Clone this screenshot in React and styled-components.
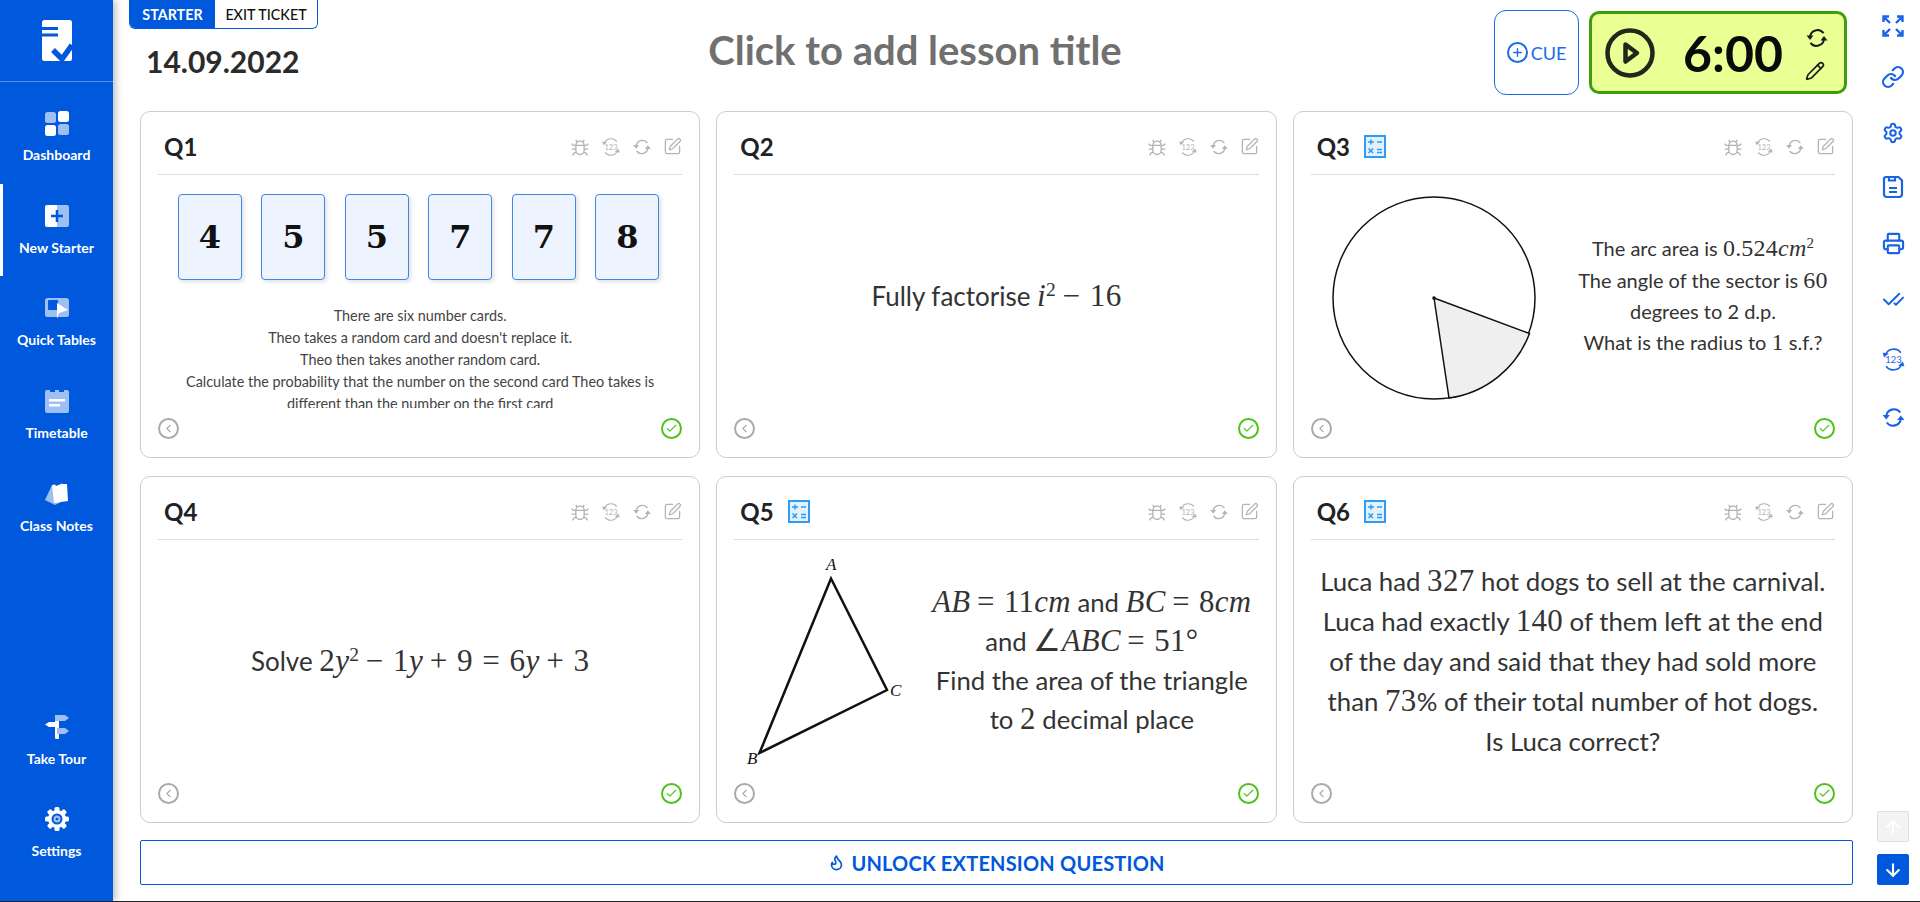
import React from "react";
import styled, { createGlobalStyle } from "styled-components";
import { Link, Settings, Printer, CheckCheck, Flame, ArrowUp, ArrowDown, SquarePen, Pencil, ChevronLeft, Check, Plus } from "lucide-react";

const BLUE = "#0058dc";
const LIGHT = "#9dbff2";

const GlobalStyle = createGlobalStyle`
    html, body { margin: 0; padding: 0; background: #fff; }
    body { font-family: Lato, "Noto Sans", sans-serif; color: #333; }
    * { box-sizing: border-box; }
`;

const Page = styled.div`
    display: flex;
    height: 902px;
    overflow: hidden;
    border-bottom: 1px solid #222;
`;

const Sidebar = styled.aside`
    width: 113px;
    flex: none;
    background: ${BLUE};
    display: flex;
    flex-direction: column;
    box-shadow: 3px 0 7px rgba(0, 0, 0, .25);
    position: relative;
    z-index: 2;
`;

const LogoBox = styled.div`
    height: 82px;
    margin-bottom: 9px;
    border-bottom: 1px solid rgba(255, 255, 255, .35);
    display: flex;
    align-items: flex-start;
    justify-content: center;
    padding-top: 20px;
`;

const NavList = styled.nav`
    display: flex;
    flex-direction: column;
    &:last-child {
        margin-top: auto;
        padding-bottom: 21px;
    }
`;

const NavItem = styled.a`
    height: 92.7px;
    padding-top: 18px;
    display: flex;
    flex-direction: column;
    align-items: center;
    gap: 9px;
    color: #fff;
    font-size: 14px;
    font-weight: 700;
    line-height: 18px;
    border-left: 3px solid ${(p) => (p.$active ? "#fff" : "transparent")};
    padding-right: 3px;
    svg { height: 28px; width: 26px; display: block; }
`;

const Main = styled.main`
    flex: 1;
    min-width: 0;
    padding: 0 13px 0 16px;
    display: flex;
    flex-direction: column;
`;

const Header = styled.header`
    height: 111px;
    display: flex;
    padding-right: 6px;
`;

const HeaderLeft = styled.div`
    width: 207px;
    flex: none;
`;

const Tabs = styled.div`
    display: inline-flex;
    height: 29px;
    border: 1px solid ${BLUE};
    border-top: none;
    border-radius: 0 0 6px 6px;
    overflow: hidden;
`;

const Tab = styled.div`
    display: flex;
    align-items: center;
    justify-content: center;
    font-size: 14.3px;
    font-weight: ${(p) => (p.$active ? 700 : 500)};
    width: ${(p) => p.$w}px;
    color: ${(p) => (p.$active ? "#fff" : "#111")};
    background: ${(p) => (p.$active ? BLUE : "#fff")};
`;

const DateText = styled.div`
    margin: 14px 0 0 17px;
    font-size: 30px;
    line-height: 36px;
    font-weight: 700;
    color: #2b2b2b;
`;

const LessonTitle = styled.h1`
    flex: 1;
    margin: 8px 0 0;
    height: 84px;
    display: flex;
    align-items: center;
    justify-content: center;
    font-size: 40px;
    font-weight: 700;
    color: #707070;
`;

const CueButton = styled.button`
    width: 85px;
    height: 85px;
    margin-top: 10px;
    background: #fff;
    border: 1px solid #1a6be8;
    border-radius: 12px;
    display: flex;
    align-items: center;
    justify-content: center;
    gap: 3px;
    padding: 0;
    color: #1a6be8;
    font-family: inherit;
    font-size: 18px;
`;

const Timer = styled.div`
    width: 258px;
    height: 83px;
    margin: 11px 0 0 10px;
    background: #eaff94;
    border: 3px solid #3f9c0a;
    border-radius: 10px;
    display: flex;
    align-items: center;
    padding: 0 15px 0 13px;
`;

const TimeText = styled.div`
    margin-left: 28px;
    font-size: 50px;
    font-weight: 700;
    color: #0a0a0a;
    line-height: 1;
`;

const TimerActions = styled.div`
    margin-left: auto;
    display: flex;
    flex-direction: column;
    gap: 11px;
    color: #1a1a1a;
    margin-top: 2px;
`;

const Grid = styled.section`
    margin-left: 11px;
    display: grid;
    grid-template-columns: repeat(3, 1fr);
    grid-auto-rows: 347px;
    gap: 18px 16px;
`;

const Card = styled.article`
    border: 1px solid #ccc;
    border-radius: 10px;
    padding: 0 17px;
    display: flex;
    flex-direction: column;
    background: #fff;
    min-width: 0;
`;

const CardHead = styled.div`
    height: 63px;
    flex: none;
    border-bottom: 1px solid #d6dfe8;
    display: flex;
    align-items: center;
    padding: 8px 0 1px 6px;
`;

const QTitle = styled.h2`
    margin: 0;
    font-size: 24px;
    font-weight: 700;
    color: #222;
`;

const CalcBadge = styled.svg`
    width: 22px;
    height: 23px;
    margin-left: 14px;
`;

const HeadTools = styled.div`
    margin-left: auto;
    display: flex;
    align-items: center;
    gap: 11px;
    color: #b3b3b3;
`;

const Body = styled.div`
    flex: 1;
    min-height: 0;
    overflow: hidden;
    padding-top: 12px;
    display: flex;
    align-items: center;
    justify-content: ${(p) => p.$justify || "center"};
    flex-direction: ${(p) => p.$dir || "row"};
`;

const CardFoot = styled.div`
    height: 49px;
    flex: none;
    padding-top: 10px;
    display: flex;
    justify-content: space-between;
    align-items: flex-start;
`;

const RoundIcon = styled.span`
    width: 21px;
    height: 21px;
    border-radius: 50%;
    border: 2px solid ${(p) => p.$color};
    color: ${(p) => p.$color};
    display: flex;
    align-items: center;
    justify-content: center;
`;

const NumberRow = styled.div`
    display: flex;
    gap: 19.5px;
    margin: 7px 3px 0 0;
    flex: none;
`;

const NumberCard = styled.div`
    width: 64px;
    height: 86px;
    background: #eef4ff;
    border: 1px solid #3f86e6;
    border-radius: 4px;
    box-shadow: 2px 2px 4px rgba(0, 0, 0, .12);
    display: flex;
    align-items: center;
    justify-content: center;
    font-family: "DejaVu Serif", serif;
    font-weight: 700;
    font-size: 32px;
    color: #111;
`;

const SmallText = styled.div`
    margin-top: 25px;
    padding: 0 24px;
    font-size: 14.4px;
    line-height: 22px;
    text-align: center;
    color: #444;
    flex: none;
    width: 100%;
`;

const QuestionText = styled.div`
    font-size: ${(p) => p.$size}px;
    line-height: ${(p) => p.$line}px;
    text-align: center;
    color: #333;
    white-space: nowrap;
    flex: none;
    margin-bottom: 3px;
    width: ${(p) => (p.$w ? `${p.$w}px` : "auto")};
    margin-left: ${(p) => (p.$w ? "auto" : 0)};
`;

const Diagram = styled.svg`
    flex: none;
    margin-left: ${(p) => p.$left || 0}px;
    display: block;
`;

const M = styled.span`
    font-family: "Liberation Serif", serif;
    font-size: 1.2em;
    word-spacing: .04em;
    letter-spacing: .01em;
`;

const V = styled(M)`
    font-style: italic;
`;

const Sup = styled.sup`
    font-family: "Liberation Serif", serif;
    font-size: .75em;
    line-height: 0;
`;

const UnlockBar = styled.button`
    margin: 17px 0 0 11px;
    height: 45px;
    background: #fff;
    border: 1px solid ${BLUE};
    border-radius: 2px;
    color: ${BLUE};
    font-family: inherit;
    font-size: 20px;
    letter-spacing: .2px;
    font-weight: 700;
    display: flex;
    align-items: center;
    justify-content: center;
    gap: 6px;
`;

const Rail = styled.aside`
    width: 54px;
    flex: none;
    display: flex;
    flex-direction: column;
    align-items: center;
    padding-top: 14px;
    color: #1a63e6;
`;

const RailIcon = styled.div`
    height: 24px;
    margin-top: ${(p) => p.$gap}px;
    display: flex;
    align-items: center;
    justify-content: center;
`;

const ScrollBtn = styled.button`
    width: 32px;
    height: 31px;
    padding: 0;
    border-radius: 2px;
    display: flex;
    align-items: center;
    justify-content: center;
    color: #fff;
    background: ${(p) => (p.$on ? BLUE : "#f3f3f3")};
    border: 1px solid ${(p) => (p.$on ? BLUE : "#dedede")};
    margin-top: ${(p) => p.$top};
    margin-bottom: ${(p) => p.$bottom || "0"};
`;

/* sidebar drawings */
const LogoIcon = () => (
    <svg width="30" height="41" viewBox="0 0 30 41">
        <rect width="30" height="41" rx="2.5" fill="#fff" />
        <path d="M0 7h16v3H0zM0 13.500h16v3H0z" fill={BLUE} />
        <path d="M11 30l9 9 10-14" fill="none" stroke={BLUE} strokeWidth="5.500" />
    </svg>
);

const DashIcon = () => (
    <svg viewBox="0 0 26 28">
        <rect x="1" y="3" width="11" height="11" rx="2.5" fill={LIGHT} />
        <rect x="14" y="2" width="11" height="11" rx="2.5" fill="#fff" />
        <rect x="1" y="16" width="11" height="11" rx="2.5" fill="#fff" />
        <rect x="14" y="15" width="11" height="11" rx="2.5" fill={LIGHT} />
    </svg>
);

const StarterIcon = () => (
    <svg viewBox="0 0 26 28">
        <path d="M3 3h10v22H3a2 2 0 0 1-2-2V5a2 2 0 0 1 2-2z" fill="#fff" />
        <path d="M13 3h10a2 2 0 0 1 2 2v18a2 2 0 0 1-2 2H13z" fill={LIGHT} />
        <path d="M13 8v12M7 14h12" stroke={BLUE} strokeWidth="2.500" />
    </svg>
);

const TablesIcon = () => (
    <svg viewBox="0 0 26 28">
        <rect x="1" y="4" width="24" height="19" rx="2.500" fill={LIGHT} />
        <rect x="4" y="6" width="10" height="10" rx="1" fill={BLUE} />
        <path d="M13 9l11 7-9 3-2 6z" fill="#fff" />
    </svg>
);

const TimetableIcon = () => (
    <svg viewBox="0 0 26 28">
        <path d="M1 5a2 2 0 0 1 2-2h3v2h5V3h4v2h5V3h3a2 2 0 0 1 2 2v19a2 2 0 0 1-2 2H3a2 2 0 0 1-2-2z" fill={LIGHT} />
        <path d="M5 12h16v2.500H5zM5 17h11v2.500H5z" fill="#fff" />
    </svg>
);

const NotesIcon = () => (
    <svg viewBox="0 0 26 28">
        <path d="M8 5l-7 15 10 5 6-3z" fill={LIGHT} />
        <path d="M8 5l3-.5 1 1.500 5-2 1-.5 1 .5 4 0 1 17-14 2z" fill="#fff" />
    </svg>
);

const TourIcon = () => (
    <svg viewBox="0 0 26 28">
        <rect x="11" y="2" width="4" height="24" rx="1.500" fill="#fff" />
        <path d="M11 2h10l4 3-4 3H11z" fill={LIGHT} />
        <path d="M13 16h8l4-3-4-3h-8z" fill={LIGHT} transform="translate(0 5)" />
        <path d="M15 9H5l-4 2.500L5 14h10z" fill="#fff" />
    </svg>
);

const GearIcon = () => (
    <svg viewBox="0 0 26 28">
        {[0, 45, 90, 135].map((a) => (
            <rect key={a} x="10.500" y="2" width="5" height="24" rx="1.500" fill="#fff" transform={`rotate(${a} 13 14)`} />
        ))}
        <circle cx="13" cy="14" r="9" fill="#fff" />
        <circle cx="13" cy="14" r="5.500" fill={BLUE} />
        <circle cx="13" cy="14" r="3.500" fill={LIGHT} />
        <circle cx="13" cy="14" r="1.300" fill={BLUE} />
    </svg>
);

/* tool icons */
const SyncIcon = ({ size = 24, width = 2 }) => (
    <svg width={size} height={size} viewBox="0 0 24 24" fill="none" stroke="currentColor" strokeWidth={width}>
        <path d="M5 11a7.500 7.500 0 0 1 13.500-3.800" />
        <path d="M19 13a7.500 7.500 0 0 1-13.500 3.800" />
        <path d="M1.500 9.500h7L5 14z" fill="currentColor" stroke="none" />
        <path d="M15.500 14.500h7L19 10z" fill="currentColor" stroke="none" />
    </svg>
);

const Sync123Icon = ({ size = 24, width = 1.6 }) => (
    <svg width={size} height={size} viewBox="0 0 24 24" fill="none" stroke="currentColor" strokeWidth={width}>
        <path d="M4.500 7A8 7 0 0 1 19 5.500" />
        <path d="M19.500 17A8 7 0 0 1 5 18.500" />
        <path d="M1.500 5.500l6 .5L3 10z" fill="currentColor" stroke="none" />
        <path d="M22.500 18.500l-6-.5 4.500-4z" fill="currentColor" stroke="none" />
        <text x="12" y="15.500" textAnchor="middle" fontSize="9" fontFamily="Lato, sans-serif" fill="currentColor" stroke="none">123</text>
    </svg>
);

const BugIcon = () => (
    <svg width="20" height="20" viewBox="0 0 24 24" fill="none" stroke="currentColor" strokeWidth="1.600">
        <path d="M7 10a5 5 0 0 1 10 0v6a5 5 0 0 1-10 0z" />
        <path d="M8.500 6.500L7 3.500M15.500 6.500L17 3.500M7 10H4L2 8M17 10h3l2-2M7 14.500H2M17 14.500h5M7.500 18.500L5 19l-2 3M16.500 18.500L19 19l2 3M7 10h10" />
    </svg>
);

const ExpandIcon = () => (
    <svg width="22" height="22" viewBox="0 0 22 22" fill="none" stroke="currentColor" strokeWidth="2.400">
        <path d="M1.500 7V1.500H7M1.500 1.500L8 8M20.500 7V1.500H15M20.500 1.500L14 8M1.500 15v5.500H7M1.500 20.500L8 14M20.500 15v5.500H15M20.500 20.500L14 14" />
    </svg>
);

const SaveIcon = () => (
    <svg width="22" height="24" viewBox="0 0 22 24" fill="none" stroke="currentColor" strokeWidth="2.200">
        <path d="M4 2h12.500L20 5.500V19a3 3 0 0 1-3 3H5a3 3 0 0 1-3-3V4a2 2 0 0 1 2-2z" />
        <path d="M7 2v3.500h6V2M7 13h8M7 17h8" />
    </svg>
);

const PlayIcon = () => (
    <svg width="50" height="50" viewBox="0 0 50 50" fill="none" stroke="#24261a" strokeWidth="4.500">
        <circle cx="25" cy="25" r="22.500" />
        <path d="M20.500 16.500L32 25l-11.500 8.500z" strokeLinejoin="round" />
    </svg>
);

const CalcIcon = () => (
    <CalcBadge viewBox="0 0 22 23">
        <rect x="1" y="1" width="20" height="21" fill="#e2f1ff" stroke="#2e9bf5" strokeWidth="2" />
        <path d="M4 7h6M7 4.500v5M13 7h5M4.500 13.500l4.500 4.500M9 13.500l-4.500 4.500M13 14.500h5M13 17.500h5" stroke="#2e9bf5" strokeWidth="1.500" fill="none" />
    </CalcBadge>
);

const questions = [
    {
        id: "Q1",
        body: (
            <Body $dir="column" $justify="flex-start">
                <NumberRow>
                    {[4, 5, 5, 7, 7, 8].map((n, i) => <NumberCard key={i}>{n}</NumberCard>)}
                </NumberRow>
                <SmallText>
                    There are six number cards.<br />
                    Theo takes a random card and doesn't replace it.<br />
                    Theo then takes another random card.<br />
                    Calculate the probability that the number on the second card Theo takes is different than the number on the first card
                </SmallText>
            </Body>
        ),
    },
    {
        id: "Q2",
        body: (
            <Body>
                <QuestionText $size={26} $line={32}>Fully factorise <V>i</V><Sup>2</Sup> <M>− 16</M></QuestionText>
            </Body>
        ),
    },
    {
        id: "Q3",
        calc: true,
        body: (
            <Body $justify="flex-start">
                <Diagram $left={21} width="204" height="204" viewBox="0 0 204 204">
                    <circle cx="102" cy="102" r="101" fill="#fff" stroke="#111" strokeWidth="1.500" />
                    <path d="M102 102L197.500 137.500A101 101 0 0 1 117 202z" fill="#efefef" stroke="#111" strokeWidth="1.500" />
                    <circle cx="102" cy="102" r="1.800" fill="#111" />
                </Diagram>
                <QuestionText $size={20} $line={31.400} $w={264}>
                    The arc area is <M>0.524</M><V>cm</V><Sup>2</Sup><br />
                    The angle of the sector is <M>60</M><br />
                    degrees to 2 d.p.<br />
                    What is the radius to <M>1</M> s.f.?
                </QuestionText>
            </Body>
        ),
    },
    {
        id: "Q4",
        body: (
            <Body>
                <QuestionText $size={26} $line={32}>
                    Solve <M>2</M><V>y</V><Sup>2</Sup> <M>− 1</M><V>y</V> <M>+ 9 = 6</M><V>y</V> <M>+ 3</M>
                </QuestionText>
            </Body>
        ),
    },
    {
        id: "Q5",
        calc: true,
        body: (
            <Body $justify="flex-start">
                <Diagram width="190" height="221" viewBox="0 0 190 221">
                    <path d="M97 26.500L153 138 25.500 201z" fill="none" stroke="#111" strokeWidth="2.500" strokeLinejoin="miter" />
                    <text x="92" y="18" fontFamily="Liberation Serif" fontStyle="italic" fontSize="17" fill="#111">A</text>
                    <text x="156" y="144" fontFamily="Liberation Serif" fontStyle="italic" fontSize="17" fill="#111">C</text>
                    <text x="13" y="212" fontFamily="Liberation Serif" fontStyle="italic" fontSize="17" fill="#111">B</text>
                </Diagram>
                <QuestionText $size={25.700} $line={39} $w={335}>
                    <V>AB</V> <M>= 11</M><V>cm</V> and <V>BC</V> <M>= 8</M><V>cm</V><br />
                    and <M>∠</M><V>ABC</V> <M>= 51°</M><br />
                    Find the area of the triangle<br />
                    to <M>2</M> decimal place
                </QuestionText>
            </Body>
        ),
    },
    {
        id: "Q6",
        calc: true,
        body: (
            <Body>
                <QuestionText $size={25.800} $line={39.500}>
                    Luca had <M>327</M> hot dogs to sell at the carnival.<br />
                    Luca had exactly <M>140</M> of them left at the end<br />
                    of the day and said that they had sold more<br />
                    than <M>73</M>% of their total number of hot dogs.<br />
                    Is Luca correct?
                </QuestionText>
            </Body>
        ),
    },
];

const railIcons = [
    { gap: 0, icon: <ExpandIcon /> },
    { gap: 27, icon: <Link size={24} strokeWidth={2.2} /> },
    { gap: 32, icon: <Settings size={22} strokeWidth={2.2} /> },
    { gap: 30, icon: <SaveIcon /> },
    { gap: 32, icon: <Printer size={23} strokeWidth={2.2} /> },
    { gap: 32, icon: <CheckCheck size={23} strokeWidth={2} /> },
    { gap: 36, icon: <Sync123Icon size={25} /> },
    { gap: 34, icon: <SyncIcon size={25} /> },
];

function App() {
    return (
        <>
            <GlobalStyle />
            <Page>
                <Sidebar>
                    <LogoBox><LogoIcon /></LogoBox>
                    <NavList>
                        <NavItem><DashIcon />Dashboard</NavItem>
                        <NavItem $active><StarterIcon />New Starter</NavItem>
                        <NavItem><TablesIcon />Quick Tables</NavItem>
                        <NavItem><TimetableIcon />Timetable</NavItem>
                        <NavItem><NotesIcon />Class Notes</NavItem>
                    </NavList>
                    <NavList>
                        <NavItem><TourIcon />Take Tour</NavItem>
                        <NavItem><GearIcon />Settings</NavItem>
                    </NavList>
                </Sidebar>

                <Main>
                    <Header>
                        <HeaderLeft>
                            <Tabs>
                                <Tab $active $w={85}>STARTER</Tab>
                                <Tab $w={102}>EXIT TICKET</Tab>
                            </Tabs>
                            <DateText>14.09.2022</DateText>
                        </HeaderLeft>
                        <LessonTitle>Click to add lesson title</LessonTitle>
                        <CueButton>
                            <RoundIcon $color="#1a6be8"><Plus size={13} strokeWidth={2.5} /></RoundIcon>
                            CUE
                        </CueButton>
                        <Timer>
                            <PlayIcon />
                            <TimeText>6:00</TimeText>
                            <TimerActions>
                                <SyncIcon size={24} />
                                <Pencil size={20} strokeWidth={2} />
                            </TimerActions>
                        </Timer>
                    </Header>

                    <Grid>
                        {questions.map((q) => (
                            <Card key={q.id}>
                                <CardHead>
                                    <QTitle>{q.id}</QTitle>
                                    {q.calc && <CalcIcon />}
                                    <HeadTools>
                                        <BugIcon />
                                        <Sync123Icon size={20} width={1.3} />
                                        <SyncIcon size={20} width={1.6} />
                                        <SquarePen size={19} strokeWidth={1.6} />
                                    </HeadTools>
                                </CardHead>
                                {q.body}
                                <CardFoot>
                                    <RoundIcon $color="#aaa"><ChevronLeft size={13} strokeWidth={2} /></RoundIcon>
                                    <RoundIcon $color="#4cc31b"><Check size={13} strokeWidth={2} /></RoundIcon>
                                </CardFoot>
                            </Card>
                        ))}
                    </Grid>

                    <UnlockBar><Flame size={17} strokeWidth={2.4} />UNLOCK EXTENSION QUESTION</UnlockBar>
                </Main>

                <Rail>
                    {railIcons.map((r, i) => <RailIcon key={i} $gap={r.gap}>{r.icon}</RailIcon>)}
                    <ScrollBtn $top="auto"><ArrowUp size={20} strokeWidth={2.5} /></ScrollBtn>
                    <ScrollBtn $on $top="12px" $bottom="16px"><ArrowDown size={20} strokeWidth={2.5} /></ScrollBtn>
                </Rail>
            </Page>
        </>
    );
}

export default App;
